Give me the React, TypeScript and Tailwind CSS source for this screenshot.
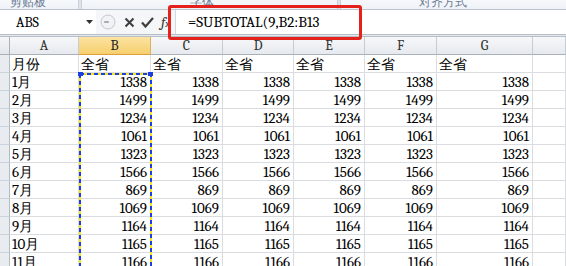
import React from "react";

const values = [1338, 1499, 1234, 1061, 1323, 1566, 869, 1069, 1164, 1165, 1166];
const colLetters = ["A", "B", "C", "D", "E", "F", "G", ""];

// split latin/digits from CJK so each part gets its own font and size
function Mixed({ text, size = "text-[15px]" }: { text: string; size?: string }) {
  const parts = text.match(/[\x20-\x7e]+|[^\x20-\x7e]+/g) ?? [];
  return (
    <>
      {parts.map((p, i) =>
        /[\x20-\x7e]/.test(p) ? (
          <span key={i} className={`font-serif ${size}`}>
            {p}
          </span>
        ) : (
          <span key={i} className="font-sans text-[14px]">
            {p}
          </span>
        )
      )}
    </>
  );
}

function RowHead() {
  return <div className="bg-[#e8ecf1] border-r border-b border-r-[#b3bbc5] border-b-[#cdd3da]" />;
}

function Cell({ children, right }: { children?: React.ReactNode; right?: boolean }) {
  return (
    <div
      className={
        right
          ? "flex items-center justify-end pr-[3px] pt-[1px] border-r border-b border-[#dadcdf] overflow-hidden whitespace-nowrap leading-none text-black"
          : "flex items-center pl-[2px] pt-[1px] border-r border-b border-[#dadcdf] overflow-hidden whitespace-nowrap leading-none text-black"
      }
    >
      {children}
    </div>
  );
}

function Marquee() {
  return (
    <svg className="absolute left-[78px] top-[35px]" width="75" height="200" viewBox="0 0 75 200">
      <rect x="2" y="2" width="71" height="260" fill="none" stroke="#f3e61a" strokeWidth="2" />
      <rect x="2" y="2" width="71" height="260" fill="none" stroke="#1d3fe0" strokeWidth="2" strokeDasharray="4 3" />
      <rect x="0" y="0" width="5" height="4" fill="#1d3fe0" />
      <rect x="70" y="0" width="5" height="4" fill="#1d3fe0" />
    </svg>
  );
}

export default function App() {
  return (
    <div className="relative w-[566px] h-[266px] overflow-hidden bg-white select-none font-sans">
      {/* ribbon group labels, cut off at the top */}
      <div className="flex h-[10px] overflow-hidden bg-linear-to-b from-[#f6f8fb] to-[#eef2f7] border-b border-[#bcc4ce] text-[12px] leading-[12px] text-[#6a7b92]">
        <div className="w-[78px] flex items-end pl-[10px] pb-[1px]">剪贴板</div>
        <div className="w-[4px] bg-[#dfe4ea] border-x border-[#c9d0d9]" />
        <div className="w-[255px] flex items-end pl-[108px] pb-[1px]">字体</div>
        <div className="w-[4px] bg-[#dfe4ea] border-x border-[#c9d0d9]" />
        <div className="flex-1 flex items-end pl-[78px] pb-[1px]">对齐方式</div>
      </div>

      {/* formula bar */}
      <div className="flex h-[24px] items-center bg-[#f4f6f8]">
        <div className="w-[96px] h-full bg-white flex items-center pl-[16px] pr-[3px] text-black">
          <Mixed text="ABS" size="text-[14px]" />
          <svg className="ml-auto" width="7" height="4" viewBox="0 0 7 4">
            <path d="M0 0H7L3.5 4Z" fill="#333" />
          </svg>
        </div>
        <svg className="ml-[4px]" width="16" height="16" viewBox="0 0 16 16">
          <circle cx="8" cy="8" r="7" fill="#f1f2f4" stroke="#c3c8cf" />
          <rect x="4" y="7" width="5" height="2" rx="1" fill="#a5abb3" />
        </svg>
        <svg className="ml-[8px]" width="11" height="11" viewBox="0 0 11 11">
          <path d="M1.5 1.5L9.5 9.5M9.5 1.5L1.5 9.5" stroke="#3d3d3d" strokeWidth="2" />
        </svg>
        <svg className="ml-[6px]" width="13" height="11" viewBox="0 0 13 11">
          <path d="M1 5.5L4.5 9.5L12 1" fill="none" stroke="#3d3d3d" strokeWidth="2.2" />
        </svg>
        <div className="ml-[7px] w-[12px] font-serif italic text-[15px] leading-none text-[#3a3a3a]">
          f<span className="text-[10px]">x</span>
        </div>
        <div className="ml-[2px] flex-1 h-full bg-white border-l border-[#d3d8de] flex items-center pl-[12px] text-black">
          <Mixed text="=SUBTOTAL(9,B2:B13" />
        </div>
      </div>
      <div className="h-[3px] bg-[#e4e8ed] border-y border-[#b7bec8]" />

      {/* sheet grid */}
      <div className="relative grid grid-cols-[10px_69px_72px_72px_71px_71px_72px_96px_1fr] auto-rows-[18px]">
        <div className="bg-linear-to-b from-[#f4f6f8] to-[#e3e7ec] border-r border-b border-[#a9b1bb]" />
        {colLetters.map((c, i) => (
          <div
            key={i}
            className={
              c === "B"
                ? "flex items-center justify-center bg-linear-to-b from-[#fce3a0] to-[#f6cf6e] border-r border-b border-r-[#d9b35c] border-b-[#dc9f3c] font-serif text-[14px] text-[#222]"
                : "flex items-center justify-center bg-linear-to-b from-[#f7f8fa] to-[#e6e9ee] border-r border-b border-r-[#c6ccd3] border-b-[#a9b1bb] font-serif text-[14px] text-[#333]"
            }
          >
            {c}
          </div>
        ))}

        <RowHead />
        <Cell>
          <Mixed text="月份" />
        </Cell>
        {[0, 1, 2, 3, 4, 5].map((i) => (
          <Cell key={i}>
            <Mixed text="全省" />
          </Cell>
        ))}
        <Cell />

        {values.map((v, r) => (
          <React.Fragment key={r}>
            <RowHead />
            <Cell>
              <Mixed text={`${r + 1}月`} />
            </Cell>
            {[0, 1, 2, 3, 4, 5].map((i) => (
              <Cell key={i} right>
                <Mixed text={String(v)} />
              </Cell>
            ))}
            <Cell />
          </React.Fragment>
        ))}

        <Marquee />
      </div>

      {/* red annotation around the formula */}
      <div className="absolute left-[168px] top-[5px] w-[194px] h-[35px] border-[3px] border-[#e5211b] rounded-[3px]" />
    </div>
  );
}
